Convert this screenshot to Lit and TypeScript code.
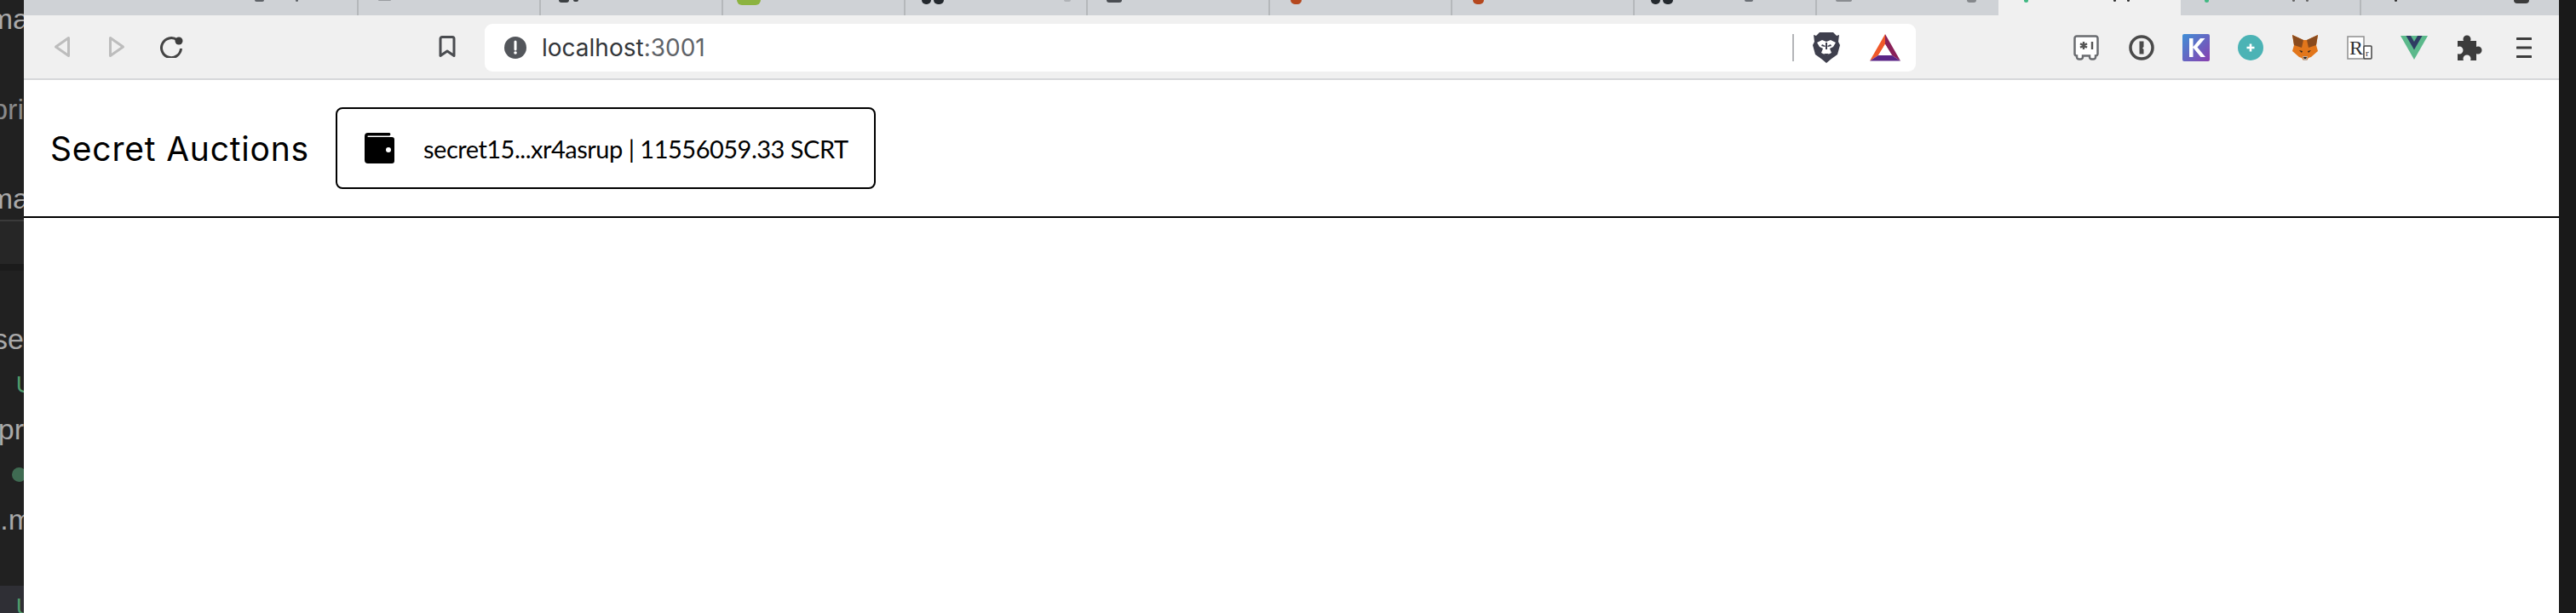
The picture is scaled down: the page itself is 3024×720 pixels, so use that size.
import { LitElement, html, css } from 'lit';
import { customElement } from 'lit/decorators.js';

// clipped favicons and titles peeking out at the top of the tab strip
const tabs = [
  { w: 214, active: false, bits: [{ x: 92, w: 11, h: 2, c: '#5f6368' }, { x: 140, w: 3, h: 2, c: '#5f6368' }] },
  { w: 214, active: false, bits: [{ x: 23, w: 15, h: 1, c: '#9a9da1' }] },
  { w: 214, active: false, bits: [{ x: 21, w: 12, h: 3, c: '#3c4043' }, { x: 38, w: 6, h: 2, c: '#3c4043' }] },
  { w: 214, active: false, bits: [{ x: 16, w: 28, h: 6, c: '#8cb33f' }] },
  { w: 214, active: false, bits: [{ x: 19, w: 11, h: 5, c: '#24292e' }, { x: 33, w: 12, h: 5, c: '#24292e' }, { x: 186, w: 8, h: 2, c: '#b0b3b7' }] },
  { w: 214, active: false, bits: [{ x: 22, w: 18, h: 3, c: '#4a4d52' }] },
  { w: 214, active: false, bits: [{ x: 24, w: 13, h: 5, c: '#b5481e' }] },
  { w: 214, active: false, bits: [{ x: 24, w: 13, h: 5, c: '#b5481e' }] },
  { w: 214, active: false, bits: [{ x: 19, w: 11, h: 5, c: '#24292e' }, { x: 33, w: 12, h: 5, c: '#24292e' }, { x: 129, w: 10, h: 2, c: '#6b6f75' }] },
  { w: 214, active: false, bits: [{ x: 22, w: 19, h: 2, c: '#8a8d91' }, { x: 176, w: 11, h: 3, c: '#85888c' }] },
  { w: 214, active: true, bits: [{ x: 30, w: 5, h: 3, c: '#41b883' }, { x: 135, w: 3, h: 2, c: '#333' }, { x: 151, w: 3, h: 2, c: '#333' }] },
  { w: 212, active: false, bits: [{ x: 28, w: 5, h: 3, c: '#41b883' }, { x: 131, w: 3, h: 2, c: '#666' }, { x: 147, w: 3, h: 2, c: '#666' }] },
  { w: 232, active: false, bits: [{ x: 39, w: 3, h: 2, c: '#333' }, { x: 179, w: 18, h: 4, c: '#3c3c3c' }] },
];

const topRows = [
  { h: 39, t: 'ma', cls: 'cut' },
  { h: 106, t: 'pri', cls: 'dim' },
  { h: 105, t: 'ma', cls: 'cut' },
];

@customElement('app-root')
export class AppRoot extends LitElement {
  static styles = css`
    :host {
      display: block;
      height: 720px;
      overflow: hidden;
      background: #202020;
      font-family: 'Inter', sans-serif;
    }
    .desk {
      display: flex;
      height: 720px;
    }
    .side {
      width: 28px;
      flex: none;
      overflow: hidden;
      background: #212121;
      display: flex;
      flex-direction: column;
      font-family: 'Liberation Sans', sans-serif;
      font-size: 34px;
      color: #a9a9a9;
    }
    .top-gap {
      height: 258px;
      flex: none;
      display: flex;
      flex-direction: column;
    }
    .row {
      white-space: nowrap;
      display: flex;
      justify-content: flex-end;
      align-items: flex-end;
      line-height: 1;
      flex: none;
    }
    .row.cut span {
      margin-right: -6px;
    }
    .row.dim {
      color: #8a8a8a;
    }
    .tabbar {
      height: 2px;
      background: #3a3a3a;
      flex: none;
    }
    .panel-head {
      height: 50px;
      flex: none;
      background: #262626;
    }
    .panel-shadow {
      height: 8px;
      flex: none;
      background: #1b1b1b;
    }
    .list {
      flex: 1;
      display: flex;
      flex-direction: column;
      padding-top: 54px;
    }
    .li {
      height: 53px;
      flex: none;
      display: flex;
      justify-content: flex-end;
      align-items: center;
      white-space: nowrap;
    }
    .li.file span {
      margin-right: -10px;
    }
    .li.green,
    .li.sel {
      color: #4f9a6c;
      font-size: 28px;
    }
    .li.green span,
    .li.sel span {
      margin-right: -11px;
    }
    .dot {
      width: 17px;
      height: 17px;
      border-radius: 50%;
      background: #3f6b52;
      margin-right: -3px;
      flex: none;
    }
    .li.sel {
      background: #2f2f35;
      margin-top: auto;
      height: 32px;
      align-items: flex-start;
      padding-top: 11px;
      box-sizing: border-box;
      line-height: 1;
    }
    .window {
      width: 2976px;
      flex: none;
      background: #fff;
      display: flex;
      flex-direction: column;
    }
    .right {
      flex: 1;
      background: #191919;
    }
    .strip {
      height: 18px;
      flex: none;
      background: #cfd2d6;
      display: flex;
      padding-left: 179px;
    }
    .tab {
      flex: none;
      height: 18px;
      box-sizing: border-box;
      border-right: 2px solid #b5b8bb;
      position: relative;
      overflow: hidden;
    }
    .tab:nth-child(10) {
      border-right: none;
    }
    .tab.active {
      background: #f0f0f0;
      border-right: none;
      margin-left: -1px;
    }
    .tab:last-child {
      border-right: none;
    }
    .bit {
      position: absolute;
      top: 0;
      border-radius: 0 0 6px 6px;
    }
    .toolbar {
      height: 74px;
      flex: none;
      background: #f0f0f0;
      border-bottom: 2px solid #d6d8da;
      display: flex;
      align-items: center;
    }
    .nav {
      display: flex;
      align-items: center;
      padding-left: 35px;
    }
    .toolbar svg {
      display: block;
      flex: none;
    }
    .forward {
      margin-left: 44px;
    }
    .reload {
      margin-left: 41px;
    }
    .bookmark {
      margin-left: 300px;
    }
    .urlbar {
      margin: 2px 0 0 34px;
      width: 1680px;
      height: 56px;
      background: #fff;
      border-radius: 9px;
      display: flex;
      align-items: center;
      padding-left: 23px;
      box-sizing: border-box;
      font-size: 28px;
      color: #33363a;
    }
    .url {
      margin-left: 18px;
      flex: 1;
    }
    .url span {
      color: #5f6368;
    }
    .divider {
      width: 2px;
      height: 32px;
      background: #b3b5b8;
      margin-right: 22px;
    }
    .brave {
      margin-right: 35px;
    }
    .bat {
      margin-right: 18px;
    }
    .ext {
      display: flex;
      align-items: center;
      margin: 2px 0 0 185px;
      gap: 33px;
    }
    .ext .one-pass {
      margin-left: 2px;
    }
    .ext .puzzle {
      margin-left: 1px;
    }
    .ext .menu {
      margin-left: 7px;
    }
    header {
      height: 162px;
      flex: none;
      box-sizing: border-box;
      border-bottom: 2px solid #000;
      display: flex;
      align-items: center;
      padding-left: 31px;
      color: #000;
    }
    h1 {
      margin: 0;
      font-weight: 400;
      font-size: 39px;
      letter-spacing: 0.8px;
      line-height: 1;
    }
    .wallet {
      margin-left: 31px;
      width: 634px;
      height: 96px;
      box-sizing: border-box;
      border: 2px solid #000;
      border-radius: 8px;
      background: #fff;
      display: flex;
      align-items: center;
      padding-left: 32px;
      font-family: 'Lato', sans-serif;
      font-size: 29px;
      letter-spacing: -0.5px;
      color: #000;
    }
    .wallet svg {
      flex: none;
      display: block;
    }
    .wallet span {
      margin-left: 33px;
      white-space: nowrap;
    }
    main {
      flex: 1;
      background: #fff;
    }
  `;

  private sideColumn() {
    return html`<div class="side">
      <div class="top-gap">
        ${topRows.map((r) => html`<div class="row ${r.cls}" style="height:${r.h}px"><span>${r.t}</span></div>`)}
      </div>
      <div class="tabbar"></div>
      <div class="panel-head"></div>
      <div class="panel-shadow"></div>
      <div class="list">
        <div class="li">se</div>
        <div class="li green"><span>U</span></div>
        <div class="li">pr</div>
        <div class="li"><div class="dot"></div></div>
        <div class="li file"><span>.m</span></div>
        <div class="li sel"><span>U</span></div>
      </div>
    </div>`;
  }

  private extensions() {
    return html`<div class="ext">
      <svg width="30" height="30" viewBox="0 0 30 30" fill="none">
        <path d="M4 1.500h22a2.500 2.500 0 0 1 2.500 2.500v18a2.500 2.500 0 0 1-2.500 2.500v1.500a2.500 2.500 0 0 1-2.500 2.500h-2a2.500 2.500 0 0 1-2.500-2.500v-1.500h-8v1.500a2.500 2.500 0 0 1-2.500 2.500h-2a2.500 2.500 0 0 1-2.500-2.500v-1.500a2.500 2.500 0 0 1-2.500-2.500v-18a2.500 2.500 0 0 1 2.500-2.500z" stroke="#6a6c70" stroke-width="2.500" fill="#fff"/>
        <path d="M12 8v9M8 10.200l8 4.600M16 10.200l-8 4.600M22 8v9" stroke="#555" stroke-width="2.400"/>
      </svg>
      <svg class="one-pass" width="30" height="30" viewBox="0 0 30 30" fill="none">
        <circle cx="15" cy="15" r="13" stroke="#4a4a4a" stroke-width="3.500"/>
        <path d="M12.500 7.500h5v6.500l-1.500 1.500 1.500 1.500v5.500h-5z" fill="#4a4a4a"/>
      </svg>
      <svg width="32" height="32" viewBox="0 0 32 32">
        <defs>
          <linearGradient id="kg" x1="0" y1="0" x2="1" y2="1">
            <stop offset="0" stop-color="#3f8fd6"/>
            <stop offset="1" stop-color="#8a3fb0"/>
          </linearGradient>
        </defs>
        <rect width="32" height="32" rx="2" fill="url(#kg)"/>
        <path d="M8 5h4.500v10L21 5h5.500l-9 10.500L27 27h-5.500l-9-11v11H8z" fill="#fff"/>
      </svg>
      <svg width="30" height="30" viewBox="0 0 30 30">
        <circle cx="15" cy="15" r="15" fill="#4bb3b5"/>
        <path d="M15 10.500v9M10.500 15h9" stroke="#fff" stroke-width="2.600"/>
      </svg>
      <svg width="32" height="30" viewBox="0 0 32 30">
        <path d="M1 0l13 6h4l13-6-2 12 2 7-8 7-3 1-2 3h-4l-2-3-3-1-8-7 2-7z" fill="#e2761b"/>
        <path d="M1 0l13 6-2 9-9-3zM31 0L18 6l2 9 9-3z" fill="#8a4b1d"/>
        <path d="M9 18l4 1-1 2zM23 18l-4 1 1 2z" fill="#2b2320"/>
        <path d="M13 25h6l-1 5h-4z" fill="#c0ad9e"/>
        <path d="M14 26h4l-1 2h-2z" fill="#2b2320"/>
      </svg>
      <svg width="30" height="28" viewBox="0 0 30 28">
        <rect x="1" y="1" width="19" height="26" fill="#fff" stroke="#8f8f8f" stroke-width="1.500"/>
        <text x="3" y="22" font-family="Liberation Serif, serif" font-size="24" fill="#333">R</text>
        <rect x="20" y="12" width="9" height="15" rx="1" fill="#fff" stroke="#444" stroke-width="1.500"/>
        <text x="22" y="24" font-family="Liberation Serif, serif" font-size="11" fill="#333">r</text>
      </svg>
      <svg width="32" height="28" viewBox="0 0 32 28">
        <path d="M0 0h32L16 28z" fill="#5bb98b"/>
        <path d="M6.500 0h19L16 16.500z" fill="#2e3c62"/>
        <path d="M12 0h8l-4 7z" fill="#5bb98b"/>
      </svg>
      <svg class="puzzle" width="30" height="30" viewBox="0 0 30 30">
        <path d="M1 7h7a4 4 0 0 1-.500-2 4.500 4.500 0 1 1 9 0 4 4 0 0 1-.500 2h7v7a4 4 0 0 1 2-.500 4.500 4.500 0 1 1 0 9 4 4 0 0 1-2-.500v8h-7a4 4 0 0 0 .500-2 4.500 4.500 0 1 0-9 0 4 4 0 0 0 .500 2H1v-8a4 4 0 0 0 2 .500 4.500 4.500 0 1 0 0-9 4 4 0 0 0-2 .500z" fill="#3c3c3c"/>
      </svg>
      <svg class="menu" width="18" height="24" viewBox="0 0 18 24">
        <path d="M1 1.500h16M1 12h16M1 22.500h16" stroke="#3c3c3c" stroke-width="3" stroke-linecap="round"/>
      </svg>
    </div>`;
  }

  render() {
    return html`<div class="desk">
      ${this.sideColumn()}
      <div class="window">
        <div class="strip">
          ${tabs.map(
            (t) => html`<div class="tab ${t.active ? 'active' : ''}" style="width:${t.w}px">
              ${t.bits.map(
                (b) => html`<div class="bit" style="left:${b.x}px;width:${b.w}px;height:${b.h}px;background:${b.c}"></div>`
              )}
            </div>`
          )}
        </div>
        <div class="toolbar">
          <div class="nav">
            <svg width="20" height="26" viewBox="0 0 20 26" fill="none">
              <path d="M17.500 2.500v21L2.500 13z" stroke="#bdbdbd" stroke-width="3" stroke-linejoin="round"/>
            </svg>
            <svg class="forward" width="20" height="26" viewBox="0 0 20 26" fill="none">
              <path d="M2.500 2.500v21L17.500 13z" stroke="#bdbdbd" stroke-width="3" stroke-linejoin="round"/>
            </svg>
            <svg class="reload" width="27" height="26" viewBox="0 0 27 26" fill="none">
              <path d="M20 5A11.500 11.500 0 1 0 24.500 15" stroke="#444" stroke-width="3"/>
              <circle cx="22" cy="6" r="4.500" fill="#3c3c3c"/>
            </svg>
          </div>
          <svg class="bookmark" width="20" height="26" viewBox="0 0 20 26" fill="none">
            <path d="M2 3.500a2 2 0 0 1 2-2h12a2 2 0 0 1 2 2v20l-8-5.500-8 5.500z" stroke="#4a4c50" stroke-width="3" stroke-linejoin="round"/>
          </svg>
          <div class="urlbar">
            <svg width="26" height="26" viewBox="0 0 26 26">
              <circle cx="13" cy="13" r="13" fill="#53565b"/>
              <path d="M13 6v9" stroke="#fff" stroke-width="3" stroke-linecap="round"/>
              <circle cx="13" cy="19" r="1.800" fill="#fff"/>
            </svg>
            <div class="url">localhost<span>:3001</span></div>
            <div class="divider"></div>
            <svg class="brave" width="32" height="36" viewBox="0 0 32 36">
              <path d="M8 0h16l4 4 3-1-1 8 2 4-3 11-7 5-6 5-6-5-7-5L0 15l2-4-1-8 3 1z" fill="#3e3f4d"/>
              <path d="M5 12l6-3 5 2 5-2 6 3-3 5-4 2 2 5-6 3-6-3 2-5-4-2z" fill="#fff"/>
              <path d="M11 14l4 2-1 1-4-1zM21 14l-4 2 1 1 4-1z" fill="#3e3f4d"/>
              <path d="M15 12h2v8h-2zM13 25h6l-3 3z" fill="#3e3f4d"/>
            </svg>
            <svg class="bat" width="36" height="32" viewBox="0 0 36 32">
              <path d="M18 0L0 31.500l10-6.500 8-13z" fill="#f0582a"/>
              <path d="M18 0v12l8 13 10 6.500z" fill="#8a2058"/>
              <path d="M0 31.500h36l-10-6.500H10z" fill="#5b2586"/>
              <path d="M18 12l8 13H10z" fill="#fff"/>
            </svg>
          </div>
          ${this.extensions()}
        </div>
        <header>
          <h1>Secret Auctions</h1>
          <div class="wallet">
            <svg width="36" height="36" viewBox="0 0 36 36">
              <path d="M4 0h25a1.800 1.800 0 0 1 0 3.500H4a.8.8 0 0 0 0 1.500h28a3 3 0 0 1 3 3v25a3 3 0 0 1-3 3H4a4 4 0 0 1-4-4V4a4 4 0 0 1 4-4z" fill="#000"/>
              <circle cx="28" cy="20" r="3" fill="#fff"/>
            </svg>
            <span>secret15...xr4asrup | 11556059.33 SCRT</span>
          </div>
        </header>
        <main></main>
      </div>
      <div class="right"></div>
    </div>`;
  }
}
